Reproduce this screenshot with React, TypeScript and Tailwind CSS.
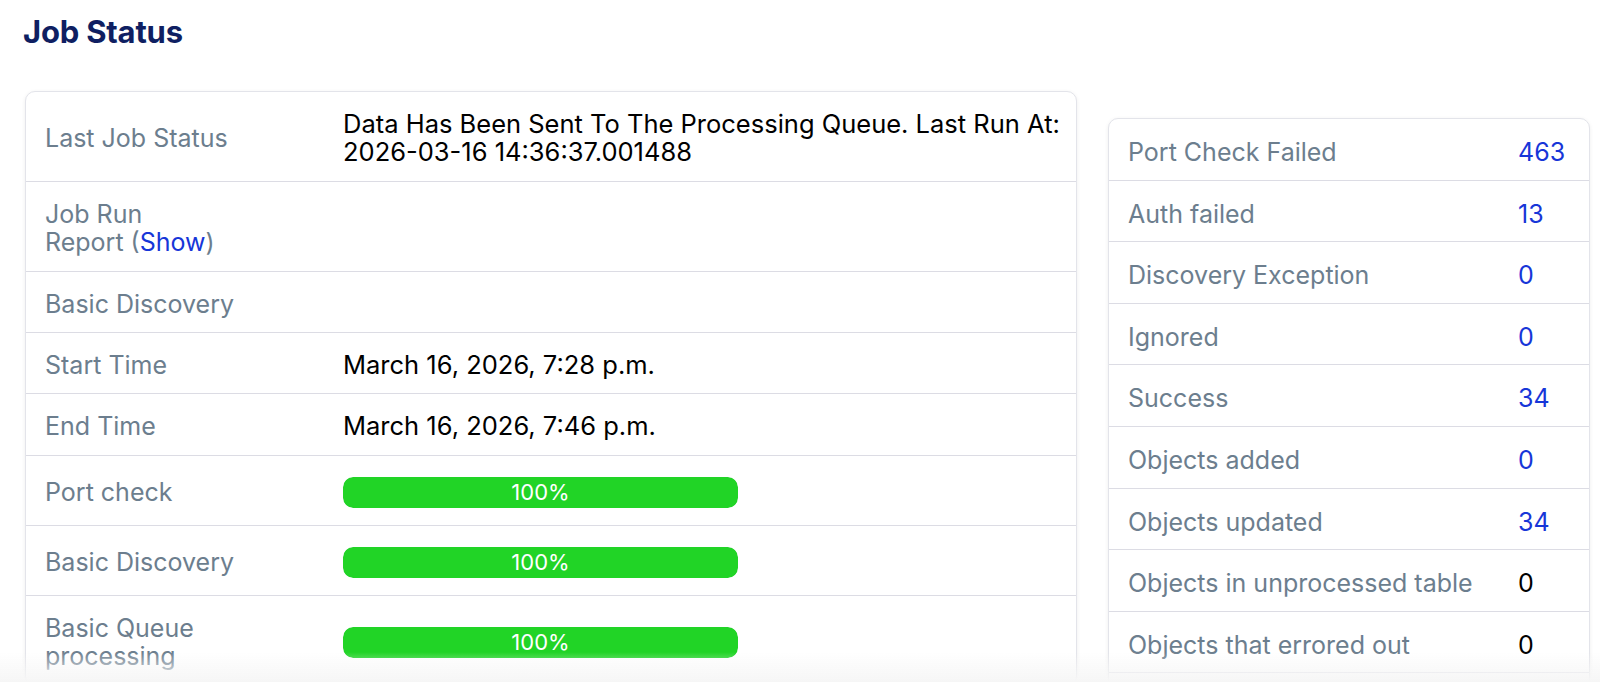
const FONT = { fontFamily: 'Inter, "Noto Sans", sans-serif' }

type LeftRow = {
  label: React.ReactNode
  value?: React.ReactNode
  bar?: number
}

const leftRows: LeftRow[] = [
  {
    label: 'Last Job Status',
    value: (
      <>
        Data Has Been Sent To The Processing Queue. Last Run At:
        <br />
        2026-03-16 14:36:37.001488
      </>
    ),
  },
  {
    label: (
      <>
        Job Run
        <br />
        Report (<span className="text-[#1736d8]">Show</span>)
      </>
    ),
  },
  { label: 'Basic Discovery' },
  { label: 'Start Time', value: 'March 16, 2026, 7:28 p.m.' },
  { label: 'End Time', value: 'March 16, 2026, 7:46 p.m.' },
  { label: 'Port check', bar: 100 },
  { label: 'Basic Discovery', bar: 100 },
  {
    label: (
      <>
        Basic Queue
        <br />
        processing
      </>
    ),
    bar: 100,
  },
]

const counts: { label: string; value: string; link: boolean }[] = [
  { label: 'Port Check Failed', value: '463', link: true },
  { label: 'Auth failed', value: '13', link: true },
  { label: 'Discovery Exception', value: '0', link: true },
  { label: 'Ignored', value: '0', link: true },
  { label: 'Success', value: '34', link: true },
  { label: 'Objects added', value: '0', link: true },
  { label: 'Objects updated', value: '34', link: true },
  { label: 'Objects in unprocessed table', value: '0', link: false },
  { label: 'Objects that errored out', value: '0', link: false },
  { label: 'Total objects', value: '34', link: false },
]

function ProgressBar({ pct }: { pct: number }) {
  return (
    <div className="h-[37px] flex items-center">
      <div className="w-[395px] h-[31px] rounded-[10px] bg-[#e9ecef] overflow-hidden">
        <div
          className="h-full rounded-[10px] bg-[#21d426] flex items-center justify-center text-white text-[22px] leading-none"
          style={{ width: `${pct}%` }}
        >
          {pct}%
        </div>
      </div>
    </div>
  )
}

export default function App() {
  return (
    <div className="min-h-screen bg-white relative" style={FONT}>
      <div className="pl-[23px] pt-[14px]">
        <h1 className="text-[31px] font-bold text-[#0f1f62] leading-[36px] tracking-[-0.2px]">Job Status</h1>
      </div>

      <div className="flex items-start gap-[31px] pl-[25px] mt-[41px]">
        {/* Job details */}
        <div className="w-[1052px] shrink-0 bg-white border border-[#e3e4ea] rounded-[10px] shadow-[0_1px_4px_rgba(0,0,0,0.07)] overflow-hidden text-[25px] leading-[28.4px]">
          {leftRows.map((row, i) => (
            <div
              key={i}
              className={`flex items-center px-[19px] pt-[18px] pb-[14px] ${i > 0 ? 'border-t border-[#dcdce4]' : ''}`}
            >
              <div className="w-[298px] shrink-0 text-[#6c7e8e]">{row.label}</div>
              <div className="flex-1 text-black text-[25.5px] whitespace-nowrap">
                {row.bar !== undefined ? <ProgressBar pct={row.bar} /> : row.value}
              </div>
            </div>
          ))}
        </div>

        {/* Counts */}
        <div className="w-[482px] shrink-0 mt-[27px] bg-white border border-[#e3e4ea] rounded-[10px] shadow-[0_1px_4px_rgba(0,0,0,0.07)] overflow-hidden text-[25px] leading-[28.6px]">
          {counts.map((c, i) => (
            <div
              key={c.label}
              className={`flex items-center pt-[19px] pb-[13px] ${i > 0 ? 'border-t border-[#dcdce4]' : ''}`}
            >
              <div className="flex-1 pl-[19px] text-[#6c7e8e]">{c.label}</div>
              <div className={`w-[71px] shrink-0 ${c.link ? 'text-[#1736d8]' : 'text-black'}`}>{c.value}</div>
            </div>
          ))}
        </div>
      </div>

      <div className="fixed inset-x-0 bottom-0 h-[30px] pointer-events-none bg-gradient-to-b from-white/0 to-[#f6f6f6]" />
    </div>
  )
}
